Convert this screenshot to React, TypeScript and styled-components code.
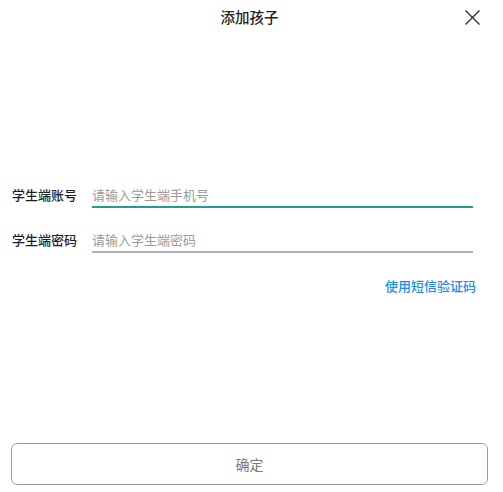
import React, { useState } from 'react'
import styled, { createGlobalStyle } from 'styled-components'

const GlobalStyle = createGlobalStyle`
  html, body {
    margin: 0;
    padding: 0;
    background: #fff;
  }
  body {
    font-family: 'Noto Sans CJK SC', 'Noto Sans', sans-serif;
    color: #222;
  }
  input::placeholder {
    color: #9a9a9a;
  }
`

const Page = styled.div`
  display: flex;
  flex-direction: column;
  height: 100vh;
  box-sizing: border-box;
`

const Header = styled.div`
  position: relative;
  height: 34px;
  display: flex;
  align-items: center;
  justify-content: center;
  flex-shrink: 0;
`

const Title = styled.div`
  font-size: 14.5px;
  font-weight: 500;
  line-height: 20px;
  color: #222;
  margin-right: 4px;
`

const CloseButton = styled.button`
  position: absolute;
  right: 23px;
  top: 10px;
  width: 15px;
  height: 15px;
  padding: 0;
  border: none;
  background: transparent;
  display: flex;
  align-items: center;
  justify-content: center;
  cursor: pointer;
`

const Form = styled.div`
  margin-top: 149px;
  display: flex;
  flex-direction: column;
  gap: 20px;
  padding: 0 30px 0 12px;
`

const Row = styled.div`
  display: flex;
  align-items: flex-start;
`

const Label = styled.label`
  width: 80px;
  flex-shrink: 0;
  font-size: 13px;
  font-weight: 500;
  line-height: 23px;
  color: #1e1e1e;
`

const Field = styled.input<{ $active?: boolean }>`
  flex: 1;
  min-width: 0;
  height: 23px;
  padding: 0;
  border: none;
  border-bottom: 2px solid ${({ $active }) => ($active ? '#1f9e8c' : '#b2b2b2')};
  outline: none;
  font-family: inherit;
  font-size: 13px;
  color: #222;
  background: transparent;
`

const LinkRow = styled.div`
  display: flex;
  justify-content: flex-end;
  padding-right: 27px;
  margin-top: 24px;
`

const SmsLink = styled.a`
  font-size: 13px;
  font-weight: 500;
  line-height: 18px;
  color: #1a8cf0;
  cursor: pointer;
`

const Spacer = styled.div`
  flex: 1;
`

const Submit = styled.button`
  margin: 0 0 7px 11px;
  width: 477px;
  height: 42px;
  border: 1px solid #9c9c9c;
  border-radius: 6px;
  background: #fff;
  font-family: inherit;
  font-size: 14px;
  color: #777;
  cursor: pointer;
`

const App = () => {
  const [account, setAccount] = useState('')
  const [password, setPassword] = useState('')

  return (
    <>
      <GlobalStyle />
      <Page>
        <Header>
          <Title>添加孩子</Title>
          <CloseButton aria-label="close">
            <svg width="15" height="15" viewBox="0 0 15 15">
              <path d="M0.5 0.5 L14.5 14.5 M14.5 0.5 L0.5 14.5" stroke="#2a2a2a" strokeWidth="1.3" fill="none" />
            </svg>
          </CloseButton>
        </Header>
        <Form>
          <Row>
            <Label>学生端账号</Label>
            <Field
              $active
              placeholder="请输入学生端手机号"
              value={account}
              onChange={(e) => setAccount(e.target.value)}
            />
          </Row>
          <Row>
            <Label>学生端密码</Label>
            <Field
              type="password"
              placeholder="请输入学生端密码"
              value={password}
              onChange={(e) => setPassword(e.target.value)}
            />
          </Row>
        </Form>
        <LinkRow>
          <SmsLink>使用短信验证码</SmsLink>
        </LinkRow>
        <Spacer />
        <Submit>确定</Submit>
      </Page>
    </>
  )
}

export default App
